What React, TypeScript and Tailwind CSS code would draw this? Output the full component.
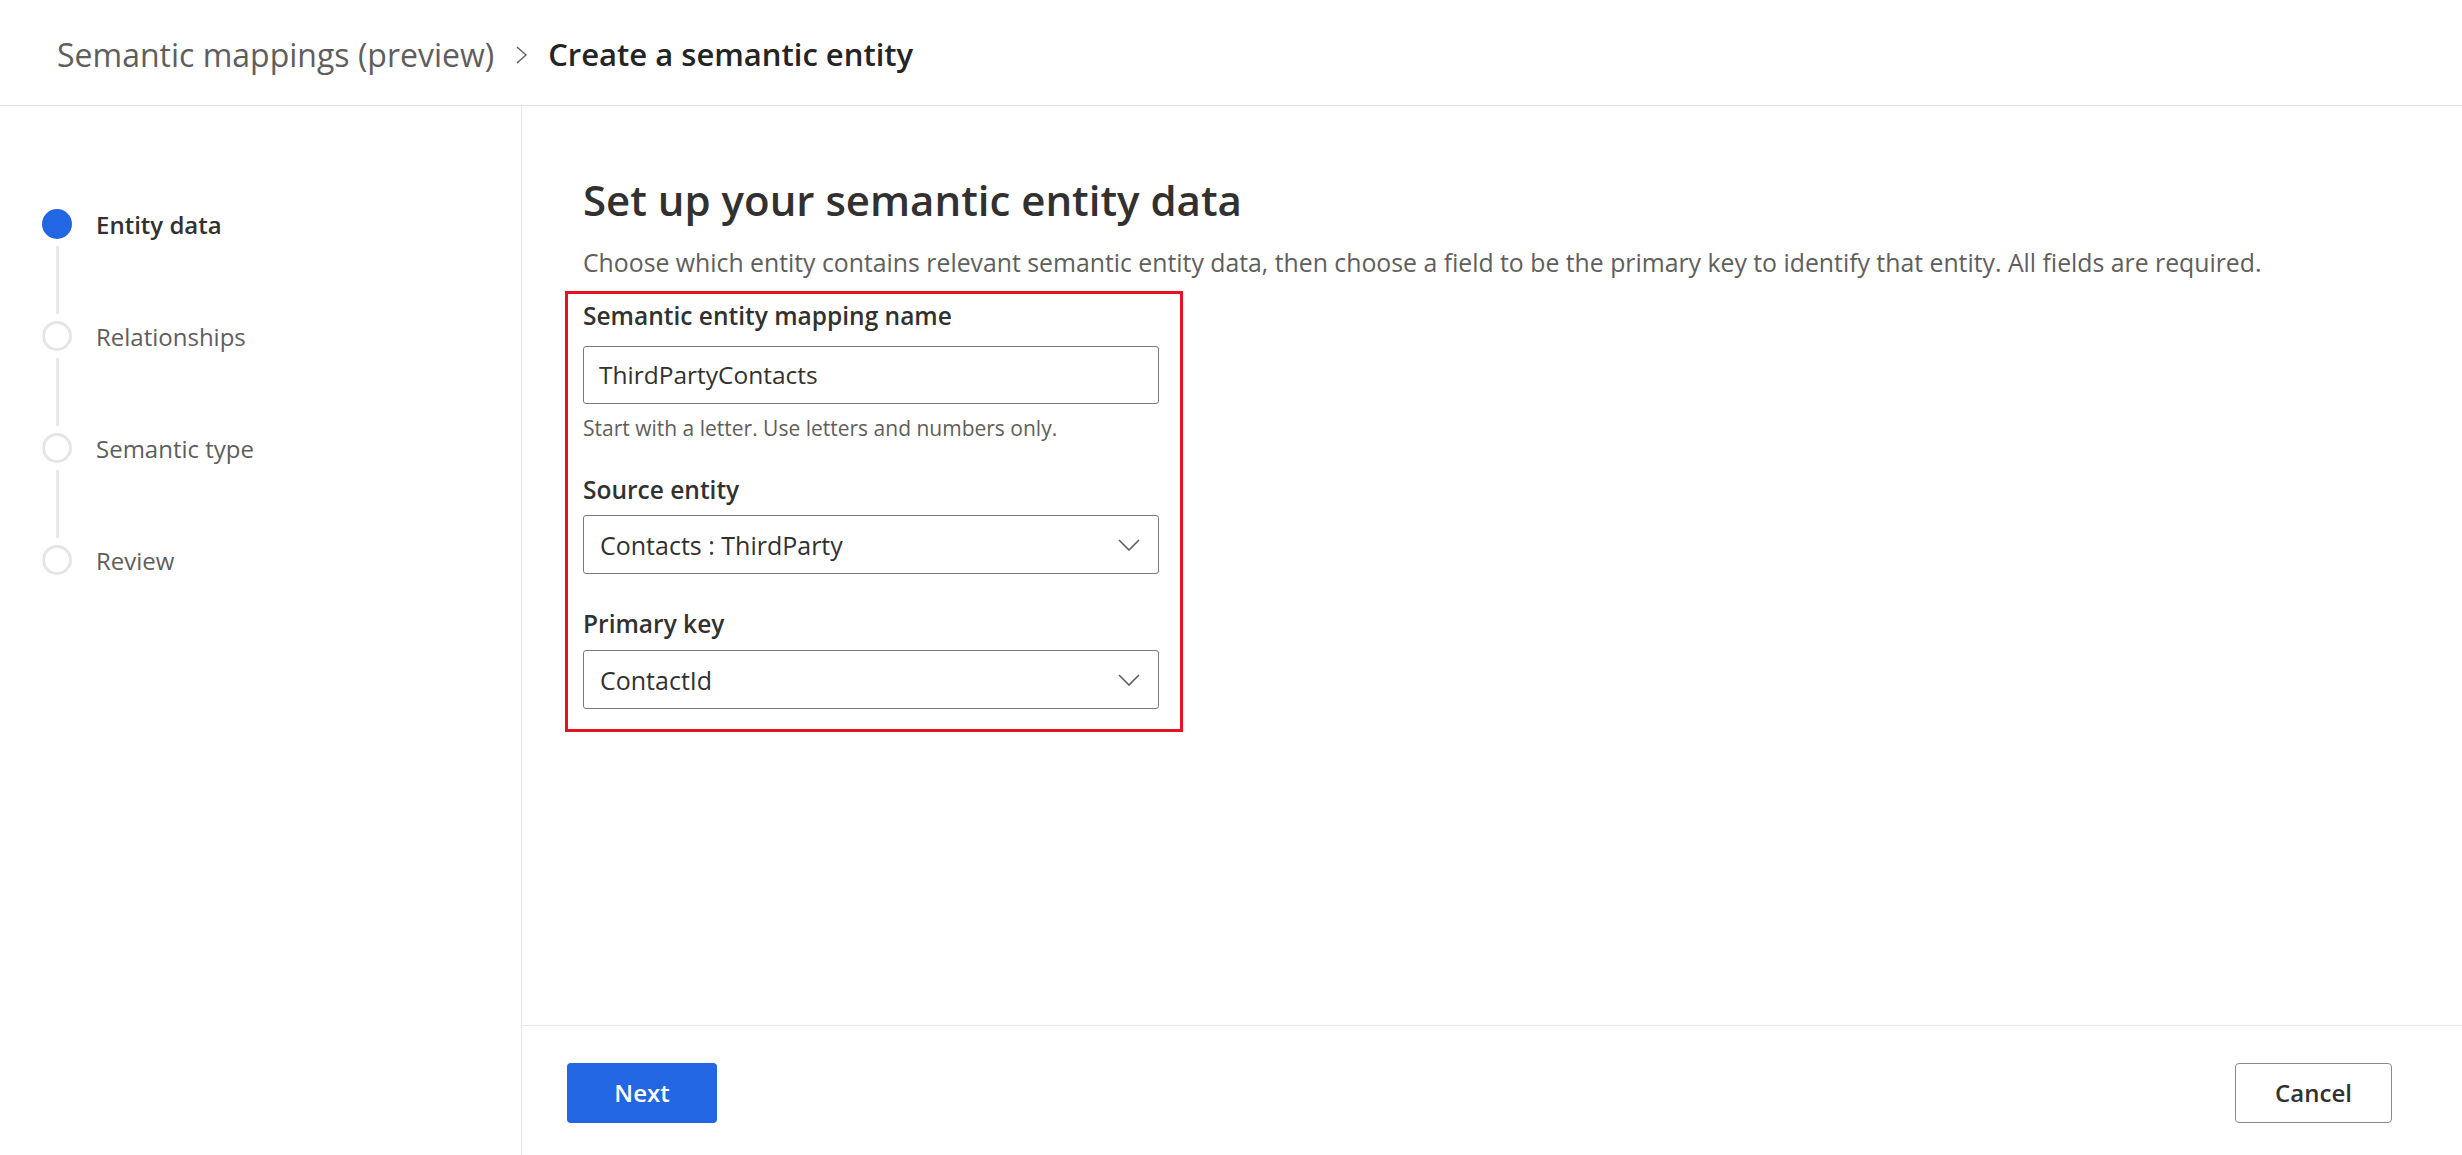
import { type ReactNode } from 'react';

const steps = [
  { label: 'Entity data', active: true },
  { label: 'Relationships', active: false },
  { label: 'Semantic type', active: false },
  { label: 'Review', active: false },
];

function ChevronDown() {
  return (
    <svg width="22" height="12" viewBox="0 0 22 12" fill="none" className="shrink-0">
      <path d="M1 1 L11 11 L21 1" stroke="#605e5c" strokeWidth="1.6" />
    </svg>
  );
}

function Stepper() {
  return (
    <div className="flex flex-col pl-[42px] pt-[103px]">
      {steps.map((step, i) => (
        <div key={step.label} className="flex flex-col">
          <div className="flex h-[30px] items-center gap-[24px]">
            {step.active ? (
              <div className="h-[30px] w-[30px] shrink-0 rounded-full bg-[#2266e3]" />
            ) : (
              <div className="h-[30px] w-[30px] shrink-0 rounded-full border-[3px] border-[#e6e6e6] bg-white" />
            )}
            <span
              className={
                step.active
                  ? 'mt-[2px] text-[24px] font-semibold leading-[32px] text-[#323130]'
                  : 'mt-[2px] text-[24px] leading-[32px] text-[#605e5c]'
              }
            >
              {step.label}
            </span>
          </div>
          {i < steps.length - 1 && (
            <div className="my-[7px] ml-[13.5px] h-[68px] w-[3px] bg-[#e8e8e8]" />
          )}
        </div>
      ))}
    </div>
  );
}

function Field({ label, children, top }: { label: string; children: ReactNode; top: string }) {
  return (
    <div className={top}>
      <div className="text-[24.5px] font-semibold leading-[32px] text-[#323130]">{label}</div>
      {children}
    </div>
  );
}

function SelectBox({ value }: { value: string }) {
  return (
    <div className="flex h-[59px] w-[576px] items-center justify-between rounded-[3px] border border-[#7a7a7a] bg-white pl-[16px] pr-[18px]">
      <span className="text-[25px] leading-[34px] text-[#323130]">{value}</span>
      <ChevronDown />
    </div>
  );
}

export default function App() {
  return (
    <div className="flex h-[1155px] w-full flex-col overflow-hidden bg-white font-['Open_Sans',sans-serif]">
      <header className="flex h-[106px] shrink-0 items-center border-b border-[#e1e1e1] pl-[57px] pt-[4px]">
        <span className="text-[32px] text-[#605e5c]">Semantic mappings (preview)</span>
        <svg width="12" height="18" viewBox="0 0 12 18" fill="none" className="ml-[22px] mr-[20px]">
          <path d="M1 1 L10 9 L1 17" stroke="#605e5c" strokeWidth="1.4" />
        </svg>
        <span className="text-[31px] font-semibold text-[#252423]">Create a semantic entity</span>
      </header>

      <div className="flex min-h-0 flex-1">
        <aside className="w-[522px] shrink-0 border-r border-[#e8e8e8]">
          <Stepper />
        </aside>

        <main className="flex min-w-0 flex-1 flex-col">
          <div className="flex-1 pl-[61px] pt-[66px]">
            <h1 className="text-[42px] font-semibold leading-[56px] text-[#323130]">
              Set up your semantic entity data
            </h1>
            <p className="mt-[18px] text-[24.8px] leading-[32px] text-[#605e5c]">
              Choose which entity contains relevant semantic entity data, then choose a field to be the primary key to identify that entity. All fields are required.
            </p>

            <div className="-ml-[18px] mt-[13px] w-[618px] border-[3px] border-[#e81123] pb-[20px] pl-[15px] pt-[6px]">
              <Field label="Semantic entity mapping name" top="">
                <div className="mt-[14px] flex h-[58px] w-[576px] items-center rounded-[3px] border border-[#7a7a7a] bg-white px-[15px]">
                  <span className="text-[24.5px] leading-[34px] text-[#323130]">ThirdPartyContacts</span>
                </div>
                <div className="mt-[10px] text-[21px] leading-[28px] text-[#605e5c]">
                  Start with a letter. Use letters and numbers only.
                </div>
              </Field>

              <Field label="Source entity" top="mt-[31.5px]">
                <div className="mt-[9.5px]">
                  <SelectBox value="Contacts : ThirdParty" />
                </div>
              </Field>

              <Field label="Primary key" top="mt-[34px]">
                <div className="mt-[10px]">
                  <SelectBox value="ContactId" />
                </div>
              </Field>
            </div>
          </div>

          <footer className="flex h-[130px] shrink-0 items-start justify-between border-t border-[#e8e8e8] pl-[45px] pr-[70px] pt-[37px]">
            <button className="h-[60px] w-[150px] rounded-[4px] bg-[#2266e3] text-[24px] font-semibold text-white">
              Next
            </button>
            <button className="h-[60px] w-[157px] rounded-[4px] border border-[#8a8886] bg-white text-[24px] font-semibold text-[#323130]">
              Cancel
            </button>
          </footer>
        </main>
      </div>
    </div>
  );
}
